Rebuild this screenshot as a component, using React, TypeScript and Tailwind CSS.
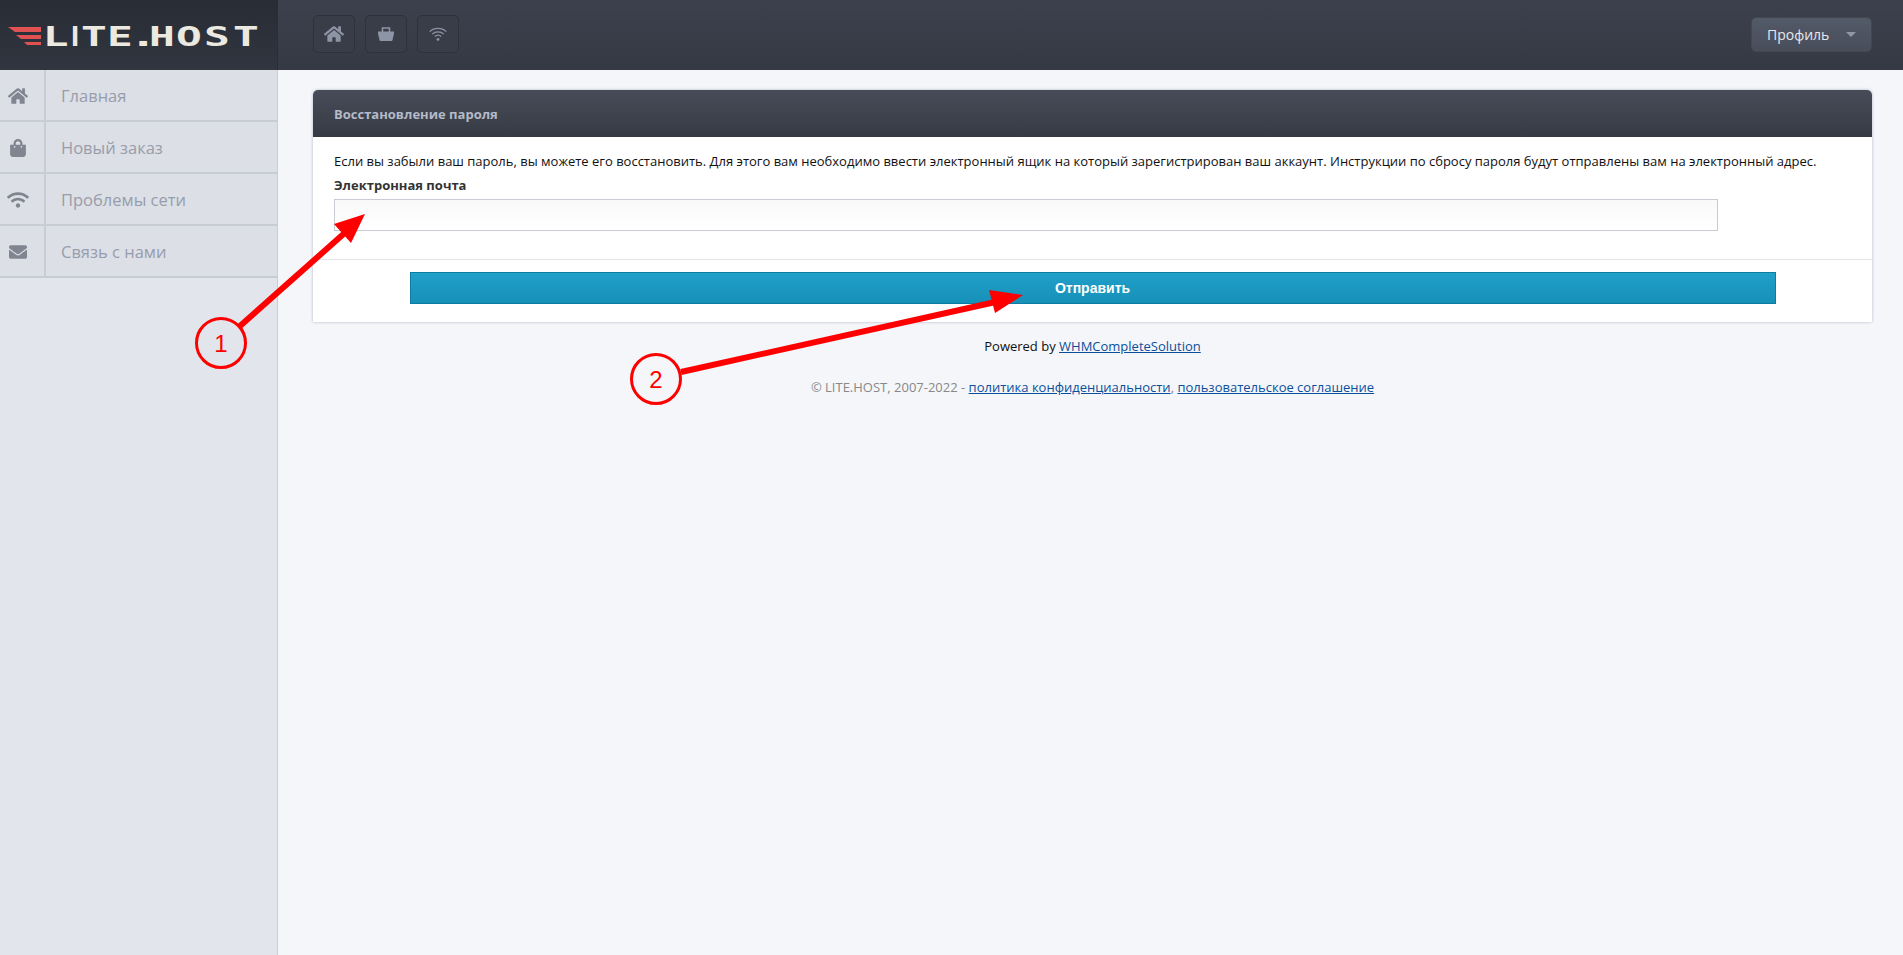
import { FaHome, FaShoppingBag, FaWifi, FaEnvelope } from "react-icons/fa";

const sideItems = [
  { label: "Главная", Icon: FaHome, size: 20 },
  { label: "Новый заказ", Icon: FaShoppingBag, size: 18 },
  { label: "Проблемы сети", Icon: FaWifi, size: 22 },
  { label: "Связь с нами", Icon: FaEnvelope, size: 18 },
];

function Logo() {
  return (
    <svg width="277" height="70" viewBox="0 0 277 70">
      <polygon points="8,27 41,27 41,32 15,32" fill="#e05252" />
      <polygon points="16,35 41,35 41,39 21,39" fill="#e05252" />
      <polygon points="24,42 41,42 41,45 27,45" fill="#e05252" />
      <g transform="translate(0,46) scale(1.65,1)">
        <text
          x="25.9 41.6 49.1 64.8 81.8 90.3 106.7 123.6 141.2"
          y="0"
          fill="#ece9e0"
          fontFamily="'DejaVu Sans Mono', monospace"
          fontWeight="700"
          fontSize="26"
        >
          L<tspan fontFamily="'DejaVu Sans', sans-serif" fontWeight="400">I</tspan>TE<tspan fontFamily="'DejaVu Sans', sans-serif">.</tspan>HOST
        </text>
      </g>
    </svg>
  );
}

function BasketIcon() {
  return (
    <svg width="16" height="14" viewBox="0 0 16 14">
      <path d="M4.5 5V1h7v4" fill="none" stroke="#8d94a5" strokeWidth="1.6" />
      <path d="M0 4.5h16v2l-1.4 6.2q-.2 1.3-1.4 1.3H2.8q-1.2 0-1.4-1.3L0 6.5z" fill="#8d94a5" />
    </svg>
  );
}

function ThinWifiIcon() {
  return (
    <svg width="18" height="14" viewBox="0 0 18 14" fill="none" stroke="#8d94a5" strokeWidth="1.3">
      <path d="M.7 4.6C5.2.3 12.8.3 17.3 4.6" />
      <path d="M3.2 7.1c3.2-3 8.4-3 11.6 0" />
      <path d="M5.8 9.6c1.8-1.6 4.6-1.6 6.4 0" />
      <circle cx="9" cy="12.4" r="1.4" fill="#8d94a5" stroke="none" />
    </svg>
  );
}

function TopButton({ children }: { children: React.ReactNode }) {
  return (
    <button className="w-[42px] h-[38px] flex items-center justify-center rounded-[5px] border border-[#2e3139] bg-[#393d48] text-[#8d94a5]">
      {children}
    </button>
  );
}

// the red arrows and numbers drawn on top of the screenshot
function Annotations() {
  return (
    <svg className="absolute left-0 top-0 pointer-events-none" width="1903" height="955" viewBox="0 0 1903 955">
      <line x1="240" y1="326" x2="348" y2="230" stroke="#ff0000" strokeWidth="6" />
      <polygon points="365,214 334,224 351,243" fill="#ff0000" />
      <circle cx="221" cy="343" r="24.5" fill="none" stroke="#ff0000" strokeWidth="3" />
      <text x="221" y="352" textAnchor="middle" fill="#ff0000" fontFamily="'Liberation Sans', sans-serif" fontSize="24">1</text>

      <line x1="681" y1="372" x2="1000" y2="301" stroke="#ff0000" strokeWidth="6" />
      <polygon points="1023,295 989,290 995,313" fill="#ff0000" />
      <circle cx="656" cy="379" r="24.5" fill="none" stroke="#ff0000" strokeWidth="3" />
      <text x="656" y="388" textAnchor="middle" fill="#ff0000" fontFamily="'Liberation Sans', sans-serif" fontSize="24">2</text>
    </svg>
  );
}

export default function App() {
  return (
    <div className="relative min-h-[955px] flex flex-col bg-[#f4f6fa] font-['Open_Sans','Noto_Sans',sans-serif] overflow-hidden">
      {/* Header */}
      <header className="h-[70px] flex bg-gradient-to-b from-[#3c414d] to-[#353944]">
        <div className="w-[278px] bg-gradient-to-b from-[#282c35] to-[#31353f] border-r border-[#2a2d35]">
          <Logo />
        </div>
        <div className="flex-1 flex items-start justify-between pl-[35px] pr-[31px] pt-[15px]">
          <div className="flex gap-[10px]">
            <TopButton><FaHome size={20} /></TopButton>
            <TopButton><BasketIcon /></TopButton>
            <TopButton><ThinWifiIcon /></TopButton>
          </div>
          <button className="mt-[2px] w-[121px] h-[35px] flex items-center justify-between pl-[15px] pr-[15px] rounded-[5px] border border-[#43474f] bg-gradient-to-b from-[#535a68] to-[#484d5a] text-[14px] text-[#e6e8ec]">
            Профиль
            <span className="w-0 h-0 border-l-[5px] border-r-[5px] border-t-[5px] border-l-transparent border-r-transparent border-t-[#9096a3]" />
          </button>
        </div>
      </header>

      <div className="flex-1 flex">
        {/* Sidebar */}
        <aside className="w-[278px] min-h-[885px] bg-[#e2e5eb] border-r border-[#c9cdd5]">
          {sideItems.map(({ label, Icon, size }) => (
            <div key={label} className="h-[52px] flex bg-[#dcdfe6] border-b-2 border-[#c8ccd4]">
              <div className="w-[46px] flex items-center justify-center pr-[9px] pt-[2px] border-r-2 border-[#c8ccd4] text-[#80858f]">
                <Icon size={size} />
              </div>
              <div className="flex-1 flex items-center pl-[15px] pt-[2px] text-[16.5px] text-[#989dab]">{label}</div>
            </div>
          ))}
        </aside>

        {/* Main */}
        <main className="flex-1 pl-[35px] pr-[31px] pt-[20px]">
          <section className="rounded-t-[5px] bg-white shadow-[0_0_3px_rgba(90,100,120,0.45)]">
            <div className="h-[47px] flex items-center px-[21px] pt-[2px] rounded-t-[5px] bg-gradient-to-b from-[#474c58] to-[#363a44] text-[13px] font-bold text-[#b4bac8]">
              Восстановление пароля
            </div>
            <div className="h-[123px] px-[21px] pt-[14px] border-b border-[#e2e4e8]">
              <p className="text-[13px] leading-[20px] text-[#111]">
                Если вы забыли ваш пароль, вы можете его восстановить. Для этого вам необходимо ввести электронный ящик на который зарегистрирован ваш аккаунт. Инструкции по сбросу пароля будут отправлены вам на электронный адрес.
              </p>
              <label className="block mt-[4px] text-[13px] leading-[20px] font-bold text-[#333]">Электронная почта</label>
              <input className="block mt-[4px] w-[1384px] h-[32px] border border-[#c9ccd3] bg-gradient-to-b from-[#f9f9f9] to-white" />
            </div>
            <div className="h-[62px] flex justify-center pt-[12px]">
              <button className="w-[1366px] h-[32px] border border-[#0f7ba3] bg-gradient-to-b from-[#21a0c9] to-[#1590b9] text-[14px] font-bold text-white font-['Liberation_Sans',sans-serif]">
                Отправить
              </button>
            </div>
          </section>

          <p className="mt-[14px] text-center text-[13px] leading-[20px] text-[#111]">
            Powered by <a className="underline text-[#0b4f9c]">WHMCompleteSolution</a>
          </p>
          <p className="mt-[21px] text-center text-[13px] leading-[20px] text-[#888]">
            © LITE.HOST, 2007-2022 - <a className="underline text-[#0b4f9c]">политика конфиденциальности</a>, <a className="underline text-[#0b4f9c]">пользовательское соглашение</a>
          </p>
        </main>
      </div>

      <Annotations />
    </div>
  );
}
